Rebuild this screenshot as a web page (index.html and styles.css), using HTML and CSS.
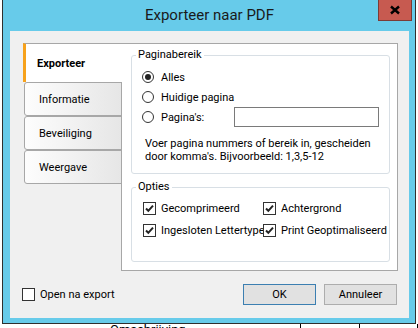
FILE: index.html
```html
<!DOCTYPE html>
<html lang="nl">
<head>
	<meta charset="UTF-8">
	<title>Exporteer naar PDF</title>
	<link rel="stylesheet" href="styles.css">
</head>
<body>
	<div class="window">
		<div class="titlebar">
			<span></span>
			<span class="title">Exporteer naar PDF</span>
			<span class="close">
				<svg width="12" height="10" viewBox="0 0 12 10"><path d="M2 1.5 L10 8.5 M10 1.5 L2 8.5" stroke="#000" stroke-width="2.4" fill="none"/></svg>
			</span>
		</div>

		<div class="client">
			<div class="main">
				<div class="tabs">
					<div class="tab active">Exporteer</div>
					<div class="tab">Informatie</div>
					<div class="tab">Beveiliging</div>
					<div class="tab">Weergave</div>
				</div>

				<div class="panel">
					<fieldset class="group range">
						<legend>Paginabereik</legend>
						<div class="row"><span class="radio on"></span>Alles</div>
						<div class="row"><span class="radio"></span>Huidige pagina</div>
						<div class="row"><span class="radio"></span>Pagina's:<span class="field"></span></div>
						<p class="hint">Voer pagina nummers of bereik in, gescheiden<br>door komma's. Bijvoorbeeld: 1,3,5-12</p>
					</fieldset>

					<fieldset class="group opts">
						<legend>Opties</legend>
						<div class="checks">
							<div class="item"><span class="box on"></span>Gecomprimeerd</div>
							<div class="item"><span class="box on"></span>Achtergrond</div>
							<div class="item"><span class="box on"></span>Ingesloten Lettertype</div>
							<div class="item"><span class="box on"></span>Print Geoptimaliseerd</div>
						</div>
					</fieldset>
				</div>
			</div>

			<div class="footer">
				<div class="item"><span class="box"></span>Open na export</div>
				<span class="btn default">OK</span>
				<span class="btn">Annuleer</span>
			</div>
		</div>
	</div>

	<!-- stuff behind the dialog -->
	<div class="behind">
		<div class="cell first"><span>Omschrijving</span></div>
		<div class="cell second"></div>
		<div class="cell"></div>
	</div>
</body>
</html>
```

FILE: styles.css
```css
*{
	box-sizing: border-box;
}
html,body{
	margin:0;
}
body{
	width:418px;
	height:328px;
	overflow:hidden;
	background:#fff;
	font-family: Roboto, "Liberation Sans", sans-serif;
	font-size:11px;
	color:#000;
}

.window{
	width:414px;
	height:324px;
	margin-left:2px;
	border:1px solid #2f2f2f;
	border-top:0;
	background:#67cbea;
	padding:0 6px 5px 7px;
}

/* title bar */
.titlebar{
	height:31px;
	display:grid;
	grid-template-columns:1fr auto 1fr;
	align-items:start;
}
.title{
	font-size:15px;
	line-height:20px;
	padding-top:5px;
	color:#1a1a1a;
}
.close{
	justify-self:end;
	margin-right:-3px;
	width:34px;
	height:21px;
	background:#c75a50;
	border:1px solid #7b3b36;
	border-top:0;
	display:flex;
	align-items:center;
	justify-content:center;
}

/* client area */
.client{
	height:287px;
	background:#f0f0f0;
	padding:12px 11px 0 13px;
}
.main{
	display:flex;
	height:228px;
}

.tabs{
	width:99px;
	margin-right:-1px;
	position:relative;
	z-index:1;
	display:flex;
	flex-direction:column;
}
.tab{
	height:34px;
	margin-left:1px;
	border:1px solid #a7a7a7;
	border-radius:3px 0 0 3px;
	background:linear-gradient(to right,#fdfdfd,#e6e6e6);
	padding-left:14px;
	display:flex;
	align-items:center;
}
.tab.active{
	height:39px;
	margin-left:0;
	border:0;
	border-top:1px solid #a7a7a7;
	border-left:3px solid #f7a21c;
	border-radius:0;
	background:#fff;
	font-weight:bold;
	padding-left:11px;
}

.panel{
	flex:1;
	border:1px solid #a7a7a7;
	background:#fff;
	padding:0 7px 0 9px;
}

/* group boxes */
.group{
	margin:0;
	min-width:0;
	border:1px solid #d8dfe5;
	border-radius:3px;
	padding:5px 0 10px 10px;
}
.group legend{
	padding:0 2px;
	margin-left:-6px;
	line-height:14px;
}
.range{
	margin-top:4px;
}
.opts{
	margin-top:6px;
	padding:3px 0 20px 10px;
}

.row{
	height:20px;
	display:flex;
	align-items:center;
}
.radio{
	width:12px;
	height:12px;
	border:1px solid #333;
	border-radius:50%;
	background:#fff;
	margin-right:7px;
	display:flex;
	align-items:center;
	justify-content:center;
}
.radio.on::after{
	content:"";
	width:6px;
	height:6px;
	border-radius:50%;
	background:#222;
}
.field{
	margin-left:auto;
	margin-right:10px;
	width:145px;
	height:20px;
	border:1px solid #7a7a7a;
	background:#fff;
}
.hint{
	margin:10px 0 0 3px;
	line-height:13px;
}

.checks{
	display:grid;
	grid-template-columns:120px 1fr;
	grid-auto-rows:22px;
	margin-left:1px;
}
.item{
	display:flex;
	align-items:center;
	white-space:nowrap;
}
.box{
	flex:none;
	width:13px;
	height:13px;
	border:1px solid #333;
	background:#fff;
	margin-right:5px;
}
.box.on{
	background:#fff url("data:image/svg+xml,%3Csvg xmlns='http://www.w3.org/2000/svg' viewBox='0 0 11 11'%3E%3Cpath d='M2 5.5 L4.3 7.8 L9 2.6' stroke='%23222' stroke-width='2' fill='none'/%3E%3C/svg%3E") center/11px 11px no-repeat;
}

/* bottom buttons */
.footer{
	display:flex;
	align-items:center;
	margin:13px 1px 0 -1px;
	gap:8px;
}
.footer .item{
	margin-right:auto;
}
.btn{
	width:73px;
	height:21px;
	border:1px solid #adadad;
	background:#e1e1e1;
	display:flex;
	align-items:center;
	justify-content:center;
}
.btn.default{
	border-color:#3c7fb1;
}

/* table peeking out under the dialog */
.behind{
	display:flex;
	height:4px;
	overflow:hidden;
}
.cell{
	border-right:1px solid #000;
	width:65px;
}
.cell.first{
	width:323px;
	padding-left:110px;
}
.cell.first span{
	display:block;
	font-size:13px;
	line-height:13px;
	margin-top:-1px;
}
```
